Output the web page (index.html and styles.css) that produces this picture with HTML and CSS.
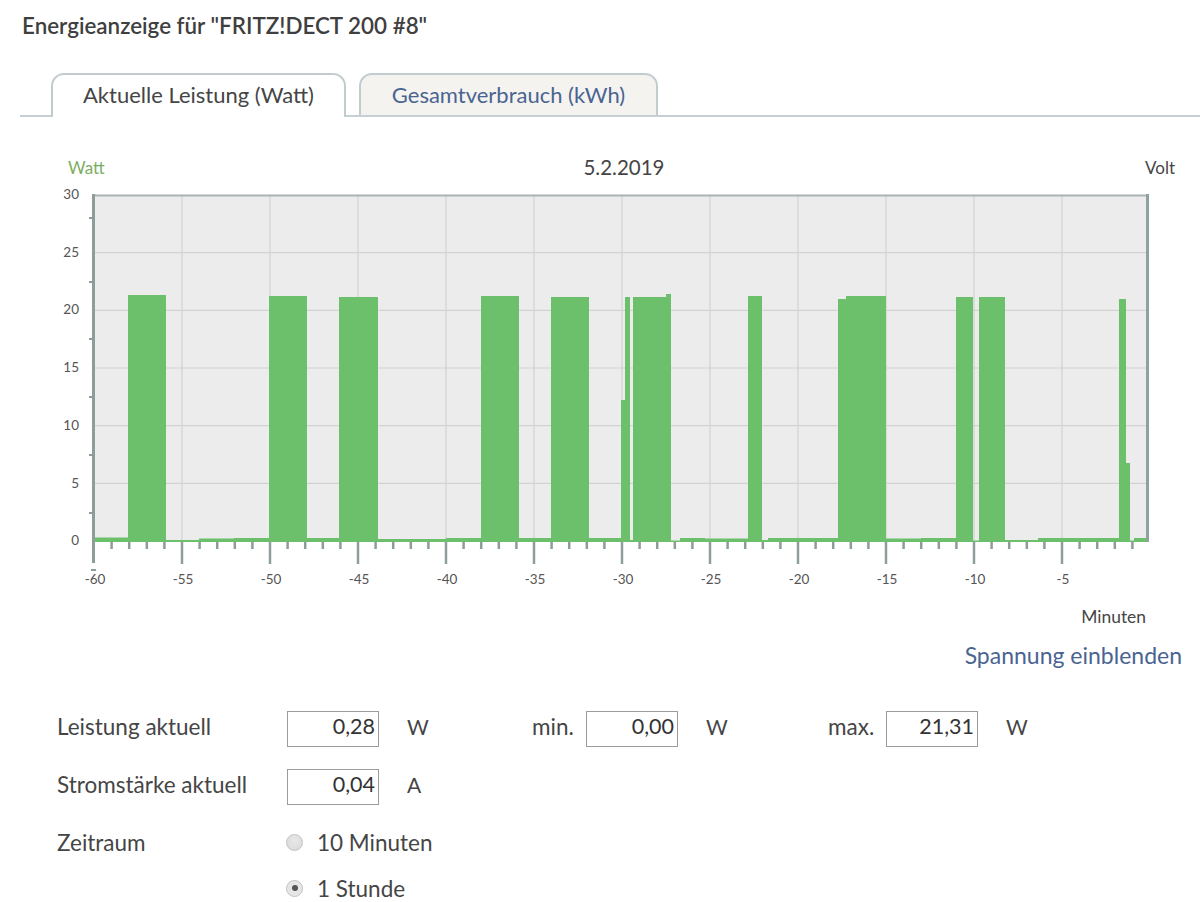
FILE: index.html
```html
<!DOCTYPE html>
<html lang="de">
<head>
<meta charset="utf-8">
<title>Energieanzeige</title>
<link rel="stylesheet" href="styles.css">
</head>
<body>
<h1 class="title">Energieanzeige für "FRITZ!DECT 200 #8"</h1>

<div class="tabs">
  <div class="tab tab-active">Aktuelle Leistung (Watt)</div>
  <div class="tab tab-inactive">Gesamtverbrauch (kWh)</div>
</div>

<div class="chart-head">
  <span class="watt">Watt</span>
  <span class="date">5.2.2019</span>
  <span class="volt">Volt</span>
</div>

<svg class="chart" width="1200" height="420" viewBox="0 180 1200 420" xmlns="http://www.w3.org/2000/svg">
  <rect x="94" y="195" width="1053" height="346" fill="#ececec"/>
  <g stroke="#d2d2d2" stroke-width="1.2">
    <line x1="94" y1="483.3" x2="1147" y2="483.3"/>
    <line x1="94" y1="425.7" x2="1147" y2="425.7"/>
    <line x1="94" y1="368" x2="1147" y2="368"/>
    <line x1="94" y1="310.3" x2="1147" y2="310.3"/>
    <line x1="94" y1="252.7" x2="1147" y2="252.7"/>
    <line x1="182" y1="195" x2="182" y2="541"/>
    <line x1="270" y1="195" x2="270" y2="541"/>
    <line x1="358" y1="195" x2="358" y2="541"/>
    <line x1="446" y1="195" x2="446" y2="541"/>
    <line x1="534" y1="195" x2="534" y2="541"/>
    <line x1="622" y1="195" x2="622" y2="541"/>
    <line x1="710" y1="195" x2="710" y2="541"/>
    <line x1="798" y1="195" x2="798" y2="541"/>
    <line x1="886" y1="195" x2="886" y2="541"/>
    <line x1="974" y1="195" x2="974" y2="541"/>
    <line x1="1062" y1="195" x2="1062" y2="541"/>
  </g>
  <!-- data -->
  <g fill="#6cbf6b">
    <rect x="94" y="537.5" width="34" height="4.5"/>
    <rect x="128" y="295" width="38" height="247"/>
    <rect x="166" y="540" width="33" height="2"/>
    <rect x="199" y="538.5" width="35" height="3.5"/>
    <rect x="234" y="538" width="35" height="4"/>
    <rect x="269" y="296" width="38" height="246"/>
    <rect x="307" y="538" width="32" height="4"/>
    <rect x="339" y="297" width="39" height="245"/>
    <rect x="378" y="539" width="68" height="3"/>
    <rect x="446" y="538" width="35" height="4"/>
    <rect x="481" y="296" width="38" height="246"/>
    <rect x="519" y="538" width="32" height="4"/>
    <rect x="551" y="297" width="38" height="245"/>
    <rect x="589" y="538" width="32" height="4"/>
    <rect x="621" y="400" width="5" height="142"/>
    <rect x="625" y="297" width="5" height="245"/>
    <rect x="630" y="540" width="3" height="2"/>
    <rect x="633" y="297" width="34" height="245"/>
    <rect x="666" y="294" width="5" height="248"/>
    <rect x="671" y="540.5" width="9" height="1.5"/>
    <rect x="680" y="538" width="25" height="4"/>
    <rect x="705" y="538.5" width="43" height="3.5"/>
    <rect x="748" y="296" width="14" height="246"/>
    <rect x="762" y="540" width="6" height="2"/>
    <rect x="768" y="538" width="70" height="4"/>
    <rect x="838" y="299" width="9" height="243"/>
    <rect x="846" y="296" width="40" height="246"/>
    <rect x="886" y="538.5" width="35" height="3.5"/>
    <rect x="921" y="538" width="35" height="4"/>
    <rect x="956" y="297" width="17" height="245"/>
    <rect x="973" y="540.5" width="6" height="1.5"/>
    <rect x="979" y="297" width="26" height="245"/>
    <rect x="1005" y="540" width="33" height="2"/>
    <rect x="1038" y="538" width="81" height="4"/>
    <rect x="1119" y="299" width="7" height="243"/>
    <rect x="1126" y="463" width="4" height="79"/>
    <rect x="1130" y="540.5" width="4" height="1.5"/>
    <rect x="1134" y="538" width="13" height="4"/>
  </g>
  <!-- borders -->
  <line x1="93" y1="195.5" x2="1147" y2="195.5" stroke="#a9b3b3" stroke-width="2"/>
  <line x1="1147.5" y1="194" x2="1147.5" y2="542" stroke="#8fa2a2" stroke-width="3"/>
  <line x1="93.5" y1="194" x2="93.5" y2="563" stroke="#8e9c9c" stroke-width="3"/>
  <!-- y minor ticks -->
  <g stroke="#8e9c9c" stroke-width="2">
    <line x1="89" y1="218" x2="93" y2="218"/>
    <line x1="89" y1="282" x2="93" y2="282"/>
    <line x1="89" y1="339" x2="93" y2="339"/>
    <line x1="89" y1="397" x2="93" y2="397"/>
    <line x1="89" y1="455" x2="93" y2="455"/>
    <line x1="89" y1="513" x2="93" y2="513"/>
  </g>
  <!-- x ticks -->
  <g stroke="#8e9c9c" stroke-width="2.5">
    <line x1="111.6" y1="542" x2="111.6" y2="549"/>
    <line x1="129.2" y1="542" x2="129.2" y2="549"/>
    <line x1="146.8" y1="542" x2="146.8" y2="549"/>
    <line x1="164.4" y1="542" x2="164.4" y2="549"/>
    <line x1="182" y1="542" x2="182" y2="564"/>
    <line x1="199.6" y1="542" x2="199.6" y2="549"/>
    <line x1="217.2" y1="542" x2="217.2" y2="549"/>
    <line x1="234.8" y1="542" x2="234.8" y2="549"/>
    <line x1="252.4" y1="542" x2="252.4" y2="549"/>
    <line x1="270" y1="542" x2="270" y2="564"/>
    <line x1="287.6" y1="542" x2="287.6" y2="549"/>
    <line x1="305.2" y1="542" x2="305.2" y2="549"/>
    <line x1="322.8" y1="542" x2="322.8" y2="549"/>
    <line x1="340.4" y1="542" x2="340.4" y2="549"/>
    <line x1="358" y1="542" x2="358" y2="564"/>
    <line x1="375.6" y1="542" x2="375.6" y2="549"/>
    <line x1="393.2" y1="542" x2="393.2" y2="549"/>
    <line x1="410.8" y1="542" x2="410.8" y2="549"/>
    <line x1="428.4" y1="542" x2="428.4" y2="549"/>
    <line x1="446" y1="542" x2="446" y2="564"/>
    <line x1="463.6" y1="542" x2="463.6" y2="549"/>
    <line x1="481.2" y1="542" x2="481.2" y2="549"/>
    <line x1="498.8" y1="542" x2="498.8" y2="549"/>
    <line x1="516.4" y1="542" x2="516.4" y2="549"/>
    <line x1="534" y1="542" x2="534" y2="564"/>
    <line x1="551.6" y1="542" x2="551.6" y2="549"/>
    <line x1="569.2" y1="542" x2="569.2" y2="549"/>
    <line x1="586.8" y1="542" x2="586.8" y2="549"/>
    <line x1="604.4" y1="542" x2="604.4" y2="549"/>
    <line x1="622" y1="542" x2="622" y2="564"/>
    <line x1="639.6" y1="542" x2="639.6" y2="549"/>
    <line x1="657.2" y1="542" x2="657.2" y2="549"/>
    <line x1="674.8" y1="542" x2="674.8" y2="549"/>
    <line x1="692.4" y1="542" x2="692.4" y2="549"/>
    <line x1="710" y1="542" x2="710" y2="564"/>
    <line x1="727.6" y1="542" x2="727.6" y2="549"/>
    <line x1="745.2" y1="542" x2="745.2" y2="549"/>
    <line x1="762.8" y1="542" x2="762.8" y2="549"/>
    <line x1="780.4" y1="542" x2="780.4" y2="549"/>
    <line x1="798" y1="542" x2="798" y2="564"/>
    <line x1="815.6" y1="542" x2="815.6" y2="549"/>
    <line x1="833.2" y1="542" x2="833.2" y2="549"/>
    <line x1="850.8" y1="542" x2="850.8" y2="549"/>
    <line x1="868.4" y1="542" x2="868.4" y2="549"/>
    <line x1="886" y1="542" x2="886" y2="564"/>
    <line x1="903.6" y1="542" x2="903.6" y2="549"/>
    <line x1="921.2" y1="542" x2="921.2" y2="549"/>
    <line x1="938.8" y1="542" x2="938.8" y2="549"/>
    <line x1="956.4" y1="542" x2="956.4" y2="549"/>
    <line x1="974" y1="542" x2="974" y2="564"/>
    <line x1="991.6" y1="542" x2="991.6" y2="549"/>
    <line x1="1009.2" y1="542" x2="1009.2" y2="549"/>
    <line x1="1026.8" y1="542" x2="1026.8" y2="549"/>
    <line x1="1044.4" y1="542" x2="1044.4" y2="549"/>
    <line x1="1062" y1="542" x2="1062" y2="564"/>
    <line x1="1079.6" y1="542" x2="1079.6" y2="549"/>
    <line x1="1097.2" y1="542" x2="1097.2" y2="549"/>
    <line x1="1114.8" y1="542" x2="1114.8" y2="549"/>
    <line x1="1132.4" y1="542" x2="1132.4" y2="549"/>
    <line x1="91" y1="570" x2="96" y2="570" stroke-width="2"/>
  </g>
  <g class="axis-label" text-anchor="end">
    <text x="79" y="199">30</text>
    <text x="79" y="257">25</text>
    <text x="79" y="314">20</text>
    <text x="79" y="372">15</text>
    <text x="79" y="430">10</text>
    <text x="79" y="488">5</text>
    <text x="79" y="545">0</text>
  </g>
  <g class="axis-label" text-anchor="middle">
    <text x="95" y="584">-60</text>
    <text x="183" y="584">-55</text>
    <text x="271" y="584">-50</text>
    <text x="359" y="584">-45</text>
    <text x="447" y="584">-40</text>
    <text x="535" y="584">-35</text>
    <text x="623" y="584">-30</text>
    <text x="711" y="584">-25</text>
    <text x="799" y="584">-20</text>
    <text x="887" y="584">-15</text>
    <text x="975" y="584">-10</text>
    <text x="1063" y="584">-5</text>
  </g>
</svg>

<div class="minuten">Minuten</div>
<div class="link-row"><a class="link" href="#">Spannung einblenden</a></div>

<div class="form">
  <div class="row">
    <span class="label">Leistung aktuell</span>
    <span class="field">0,28</span>
    <span class="unit unit-wide">W</span>
    <span class="sublabel sub-min">min.</span>
    <span class="field">0,00</span>
    <span class="unit unit-wide2">W</span>
    <span class="sublabel sub-max">max.</span>
    <span class="field">21,31</span>
    <span class="unit">W</span>
  </div>
  <div class="row">
    <span class="label">Stromstärke aktuell</span>
    <span class="field">0,04</span>
    <span class="unit">A</span>
  </div>
  <div class="row">
    <span class="label">Zeitraum</span>
    <span class="radio"></span>
    <span class="radio-text">10 Minuten</span>
  </div>
  <div class="row row-last">
    <span class="label"></span>
    <span class="radio radio-checked"></span>
    <span class="radio-text">1 Stunde</span>
  </div>
</div>
</body>
</html>
```
FILE: styles.css
```css
html, body {
  margin: 0;
  padding: 0;
  background: #ffffff;
}
body {
  width: 1200px;
  font-family: "Lato", "Open Sans", sans-serif;
  color: #454545;
}
.title {
  margin: 0;
  padding: 13px 0 0 22px;
  font-size: 22.4px;
  line-height: 26px;
  font-weight: 600;
  color: #3f3f3f;
}
.tabs {
  margin: 34px 0 0 20px;
  padding-left: 31px;
  display: flex;
  gap: 13px;
  border-bottom: 2px solid #c6cfd2;
  height: 42px;
}
.tab {
  height: 42px;
  box-sizing: border-box;
  border: 2px solid #c2cccf;
  border-bottom: none;
  border-radius: 13px 13px 0 0;
  font-size: 22px;
  line-height: 40px;
  text-align: center;
}
.tab-active {
  width: 295px;
  background: #ffffff;
  color: #454545;
  height: 44px;
  margin-bottom: -2px;
}
.tab-inactive {
  width: 299px;
  background: #f4f3f0;
  color: #4a6491;
}
.chart-head {
  margin-top: 39px;
  padding: 0 25px 0 68px;
  display: flex;
  justify-content: space-between;
  align-items: center;
  height: 22px;
}
.watt {
  font-size: 17px;
  color: #7aae62;
  width: 60px;
}
.date {
  font-size: 20.5px;
  color: #454545;
  margin-left: 5px;
}
.volt {
  font-size: 17px;
  color: #454545;
  width: 60px;
  text-align: right;
}
.chart {
  display: block;
  margin-top: 2px;
}
.axis-label {
  font-family: "Lato", "Open Sans", sans-serif;
  font-size: 13.5px;
  fill: #555555;
}
.minuten {
  margin-top: 6px;
  padding-right: 54px;
  text-align: right;
  font-size: 17.4px;
  line-height: 22px;
  color: #454545;
}
.link-row {
  margin-top: 14px;
  padding-right: 18px;
  text-align: right;
  line-height: 26px;
}
.link {
  font-size: 23px;
  color: #4a6491;
  text-decoration: none;
}
.form {
  margin-top: 40px;
  padding-left: 57px;
}
.row {
  display: flex;
  align-items: center;
  height: 36px;
  margin-bottom: 22px;
  font-size: 22.5px;
}
.row-last {
  height: 24px;
  margin-bottom: 0;
  margin-top: -6px;
}
.label,
.unit,
.sublabel,
.radio-text {
  line-height: 26px;
  padding-bottom: 5px;
}
.label {
  width: 230px;
  color: #454545;
}
.field {
  width: 92px;
  height: 36px;
  box-sizing: border-box;
  border: 1.5px solid #9c9c9c;
  text-align: right;
  padding-right: 3px;
  line-height: 28px;
  font-size: 21.5px;
  color: #333333;
}
.unit {
  padding-left: 28px;
  color: #454545;
  font-size: 21px;
}
.unit-wide {
  width: 153px;
  box-sizing: border-box;
}
.unit-wide2 {
  width: 150px;
  box-sizing: border-box;
}
.sublabel {
  color: #454545;
}
.sub-min {
  width: 54px;
}
.sub-max {
  width: 58px;
}
.radio {
  width: 17px;
  height: 17px;
  box-sizing: border-box;
  border-radius: 50%;
  border: 1px solid #c2c2c2;
  background: radial-gradient(circle at 50% 40%, #e8e8e8 0%, #d8d8d8 100%);
  margin: 0 14px 6px -1px;
  position: relative;
}
.radio-checked {
  background: #e6e6e6;
}
.radio-checked::after {
  content: "";
  position: absolute;
  left: 4.5px;
  top: 4.5px;
  width: 6px;
  height: 6px;
  border-radius: 50%;
  background: #555555;
}
.radio-text {
  color: #454545;
}
```
